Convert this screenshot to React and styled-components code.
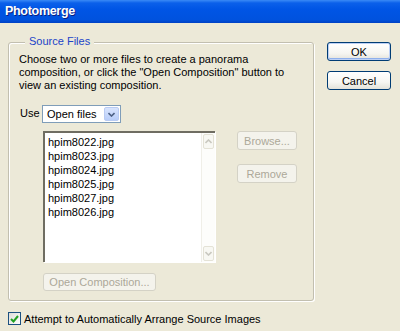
import React from "react";
import styled, { createGlobalStyle } from "styled-components";

const GlobalStyle = createGlobalStyle`
  html, body { margin: 0; padding: 0; }
  *, *::before, *::after { box-sizing: border-box; }
  body { font-family: "Liberation Sans", Arial, sans-serif; font-size: 11px; }
`;

const files = [
  "hpim8022.jpg",
  "hpim8023.jpg",
  "hpim8024.jpg",
  "hpim8025.jpg",
  "hpim8027.jpg",
  "hpim8026.jpg",
];

const Dialog = styled.div`
  width: 400px;
  height: 331px;
  background: #ece9d8;
  overflow: hidden;
  color: #000;
`;

const TitleBar = styled.div`
  height: 23px;
  display: flex;
  align-items: center;
  padding: 0 0 1px 5px;
  background: linear-gradient(#3a8af6 0, #0b60ea 3px, #0055e5 40%, #0052de 85%, #0041c4 100%);
  color: #fff;
  font-family: "Liberation Sans", Arial, sans-serif;
  font-weight: bold;
  font-size: 12.5px;
  letter-spacing: -0.3px;
  text-shadow: 1px 1px 0 #0a1f80;
`;

const Body = styled.div`
  display: flex;
  padding: 19px 0 0 8px;
`;

const LeftCol = styled.div`
  width: 306px;
`;

const GroupBox = styled.div`
  position: relative;
  height: 259px;
  border: 1px solid #c2bfb0;
  border-radius: 3px;
  box-shadow: 1px 1px 0 #fff, inset 1px 1px 0 #fff;
  padding: 10px 0 0 10px;
`;

const Legend = styled.span`
  position: absolute;
  top: -9px;
  left: 16px;
  padding: 0 4px;
  background: #ece9d8;
  color: #2144c8;
  line-height: 14px;
`;

const Intro = styled.p`
  margin: 0;
  line-height: 13px;
  width: 290px;
`;

const UseRow = styled.div`
  display: flex;
  align-items: center;
  margin-top: 13px;
  height: 18px;
`;

const UseLabel = styled.span`
  width: 23px;
  padding-left: 1px;
  margin-top: -3px;
`;

const Select = styled.div`
  display: flex;
  width: 79px;
  height: 18px;
  border: 1px solid #7f9db9;
  background: #fff;
  padding: 1px;
`;

const SelectValue = styled.span`
  flex: 1;
  padding-left: 3px;
  line-height: 14px;
`;

const DropButton = styled.span`
  width: 15px;
  height: 14px;
  border-radius: 2px;
  background: linear-gradient(#d8e4fd, #b8cdf9);
  border: 1px solid #b9cbf3;
  display: flex;
  align-items: center;
  justify-content: center;
`;

const ListRow = styled.div`
  display: flex;
  margin-top: 8px;
  padding-left: 24px;
`;

const ListBox = styled.div`
  display: flex;
  width: 172px;
  height: 131px;
  background: #fff;
  border-top: 2px solid #6f6d62;
  border-left: 2px solid #6f6d62;
  box-shadow: 1px 1px 0 #fff;
`;

const Items = styled.div`
  flex: 1;
  padding: 2px 0 0 3px;
`;

const Item = styled.div`
  line-height: 14px;
  height: 14px;
`;

const ScrollBar = styled.div`
  width: 14px;
  display: flex;
  flex-direction: column;
  justify-content: space-between;
  padding: 1px;
  background: #fdfdfb;
  border-left: 1px solid #f0efe8;
`;

const ScrollArrow = styled.div`
  height: 15px;
  border: 1px solid #e4e2d6;
  border-radius: 2px;
  display: flex;
  align-items: center;
  justify-content: center;
  background: #f8f8f3;
`;

const SideButtons = styled.div`
  display: flex;
  flex-direction: column;
  gap: 14px;
  margin-left: 22px;
`;

const Button = styled.div`
  width: ${(p) => p.$w || 60}px;
  height: ${(p) => p.$h || 19}px;
  display: flex;
  align-items: center;
  justify-content: center;
  border-radius: 3px;
  border: 1px solid ${(p) => (p.$disabled ? "#d4d2c6" : "#003c74")};
  background: ${(p) =>
    p.$disabled ? "#f4f3ec" : "linear-gradient(#fff 0, #f6f6f2 60%, #e3e2da 100%)"};
  color: ${(p) => (p.$disabled ? "#aca899" : "#000")};
  box-shadow: ${(p) =>
    p.$default ? "inset 0 0 0 1px #bcd0f5, inset 0 -1px 0 1px #8fb0ec" : "none"};
`;

const OpenRow = styled.div`
  margin: 11px 0 0 24px;
`;

const CheckRow = styled.div`
  display: flex;
  align-items: center;
  margin-top: 11px;
  height: 13px;
`;

const CheckBox = styled.span`
  width: 13px;
  height: 13px;
  border: 1px solid #1c5180;
  background: linear-gradient(135deg, #dcdcd7, #fff);
  display: flex;
  align-items: center;
  justify-content: center;
  margin-right: 3px;
`;

const RightCol = styled.div`
  display: flex;
  flex-direction: column;
  gap: 10px;
  margin-left: 13px;
`;

function Chevron({ up, color, size = 7 }) {
  return (
    <svg width={size} height={size - 2} viewBox="0 0 7 5">
      <path
        d={up ? "M0.5 4 L3.5 1 L6.5 4" : "M0.5 1 L3.5 4 L6.5 1"}
        fill="none"
        stroke={color}
        strokeWidth="1.6"
      />
    </svg>
  );
}

export default function App() {
  return (
    <Dialog>
      <GlobalStyle />
      <TitleBar>Photomerge</TitleBar>
      <Body>
        <LeftCol>
          <GroupBox>
            <Legend>Source Files</Legend>
            <Intro>
              Choose two or more files to create a panorama composition, or
              click the "Open Composition" button to view an existing
              composition.
            </Intro>
            <UseRow>
              <UseLabel>Use</UseLabel>
              <Select>
                <SelectValue>Open files</SelectValue>
                <DropButton>
                  <Chevron color="#4d6185" />
                </DropButton>
              </Select>
            </UseRow>
            <ListRow>
              <ListBox>
                <Items>
                  {files.map((f) => (
                    <Item key={f}>{f}</Item>
                  ))}
                </Items>
                <ScrollBar>
                  <ScrollArrow>
                    <Chevron up color="#c9c8c0" />
                  </ScrollArrow>
                  <ScrollArrow>
                    <Chevron color="#c9c8c0" />
                  </ScrollArrow>
                </ScrollBar>
              </ListBox>
              <SideButtons>
                <Button $disabled>Browse...</Button>
                <Button $disabled>Remove</Button>
              </SideButtons>
            </ListRow>
            <OpenRow>
              <Button $disabled $w={113} $h={18}>
                Open Composition...
              </Button>
            </OpenRow>
          </GroupBox>
          <CheckRow>
            <CheckBox>
              <svg width="9" height="8" viewBox="0 0 9 8">
                <path d="M1 4 L3.5 6.5 L8 1" fill="none" stroke="#21a121" strokeWidth="2" />
              </svg>
            </CheckBox>
            <span>Attempt to Automatically Arrange Source Images</span>
          </CheckRow>
        </LeftCol>
        <RightCol>
          <Button $w={64} $h={19} $default>
            OK
          </Button>
          <Button $w={64} $h={19}>
            Cancel
          </Button>
        </RightCol>
      </Body>
    </Dialog>
  );
}
